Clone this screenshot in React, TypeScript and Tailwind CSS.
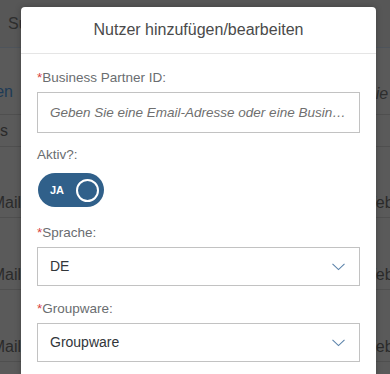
import React from "react";

const font = { fontFamily: '"Liberation Sans", Arial, sans-serif' };

function Chevron() {
  return (
    <svg width="13" height="8" viewBox="0 0 13 8" fill="none">
      <polyline points="0.5,0.8 6.5,6.6 12.5,0.8" stroke="#5b83aa" strokeWidth="1.1" />
    </svg>
  );
}

function Label({ text, required }: { text: string; required?: boolean }) {
  return (
    <div className="h-5 leading-5 text-[13.5px] text-[#6a6d70]">
      {required && <span className="text-[#d9403f]">*</span>}
      {text}
    </div>
  );
}

function Select({ value }: { value: string }) {
  return (
    <div className="mt-1 flex h-[39px] items-center justify-between border border-[#c2c2c2] pl-3 pr-[14px] text-[14px] text-[#32363a]">
      <span>{value}</span>
      <Chevron />
    </div>
  );
}

function MailRow({ h }: { h: string }) {
  return (
    <div className={`flex items-end justify-between border-b border-[#4f4f4f] pb-[2px] ${h}`}>
      <div className="flex w-[21px] justify-end overflow-hidden whitespace-nowrap">
        <span className="text-[16px] text-[#2a2a2a]">E-Mail</span>
      </div>
      <div className="w-[29px] overflow-hidden whitespace-nowrap">
        <span className="text-[16px] text-[#2a2a2a]">Webex</span>
      </div>
    </div>
  );
}

export default function App() {
  return (
    <div className="relative h-[374px] w-[390px] overflow-hidden bg-[#5a5a5a]" style={font}>
      {/* background page under overlay */}
      <div className="flex flex-col">
        <div className="flex h-[48px] items-center border-b border-[#4e545b] bg-[#575757] pl-2">
          <span className="text-[16px] text-[#2e2e2e]">Suche</span>
        </div>
        <div className="flex h-[67px] items-end justify-between border-b border-[#4f4f4f] pb-[10px]">
          <div className="flex w-[13px] justify-end overflow-hidden whitespace-nowrap">
            <span className="text-[16px] text-[#1e3a56]">Spalten</span>
          </div>
          <div className="flex h-[20px] w-[25px] items-center overflow-hidden whitespace-nowrap">
            <span className="text-[16px] italic text-[#2e2e2e]">Sie</span>
          </div>
        </div>
        <div className="flex h-[32px] items-center justify-between border-b border-[#4f4f4f]">
          <div className="flex w-[8px] justify-end overflow-hidden whitespace-nowrap">
            <span className="text-[16px] text-[#2a2a2a]">Status</span>
          </div>
        </div>
        <MailRow h="h-[71px]" />
        <MailRow h="h-[72px]" />
        <MailRow h="h-[72px]" />
      </div>

      {/* dialog */}
      <div className="absolute left-[21px] top-[7px] w-[355px] rounded-t-[4px] bg-white shadow-[0_0_6px_rgba(0,0,0,0.25)]">
        <div className="flex h-[47px] items-center justify-center border-b border-[#e5e5e5] text-[16px] text-[#4a4a4a]">
          Nutzer hinzufügen/bearbeiten
        </div>
        <div className="px-4 pt-[14px] pb-4">
          <Label text="Business Partner ID:" required />
          <input
            className="mt-1 block h-[41px] w-full border border-[#c2c2c2] px-3 text-[13.5px] italic text-ellipsis outline-none placeholder:text-[#6f6f6f]"
            placeholder="Geben Sie eine Email-Adresse oder eine Business Partner ID ein"
          />
          <div className="mt-3">
            <Label text="Aktiv?:" />
          </div>
          <div className="ml-px mt-2 flex h-[34px] w-[66px] items-center justify-between rounded-full bg-[#30608a] pl-3 pr-[5px]">
            <span className="text-[11px] font-bold text-white">JA</span>
            <span className="h-[23px] w-[23px] rounded-full border-2 border-white" />
          </div>
          <div className="mt-4">
            <Label text="Sprache:" required />
          </div>
          <Select value="DE" />
          <div className="mt-[13px]">
            <Label text="Groupware:" required />
          </div>
          <Select value="Groupware" />
        </div>
      </div>
    </div>
  );
}
